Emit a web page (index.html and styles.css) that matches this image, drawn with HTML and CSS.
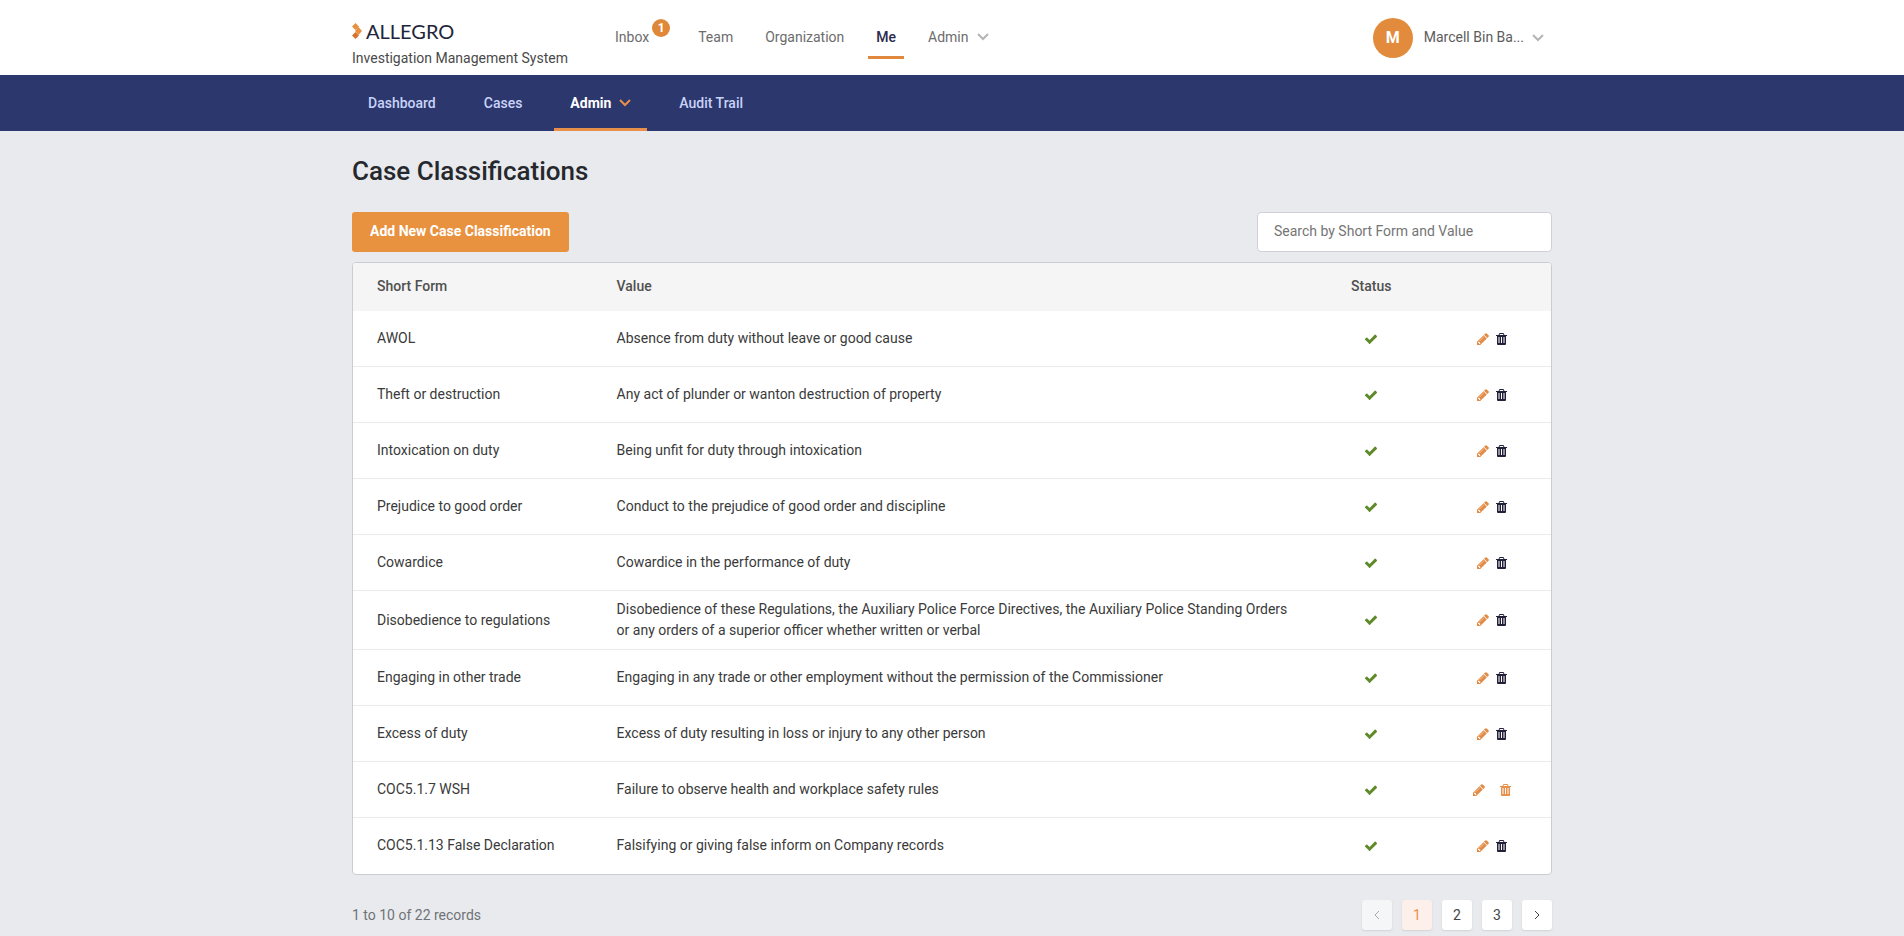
FILE: index.html
```html
<!DOCTYPE html>
<html lang="en">
<head>
  <meta charset="UTF-8" />
  <meta name="viewport" content="width=device-width, initial-scale=1.0"/>
  <title>Case Classifications</title>
  <link rel="stylesheet" href="styles.css">
</head>
<body>

  <svg class="sprite" aria-hidden="true">
    <symbol id="check" viewBox="0 0 1792 1792">
      <path d="M1671 566q0 40-28 68l-724 724-136 136q-28 28-68 28t-68-28l-136-136-362-362q-28-28-28-68t28-68l136-136q28-28 68-28t68 28l294 295 656-657q28-28 68-28t68 28l136 136q28 28 28 68z"/>
    </symbol>
    <symbol id="pencil" viewBox="0 0 1792 1792">
      <path d="M491 1536l91-91-235-235-91 91v107h128v128h107zm523-928q0-22-22-22-10 0-17 7l-542 542q-7 7-7 17 0 22 22 22 10 0 17-7l542-542q7-7 7-17zm-54-192l416 416-832 832h-416v-416zm683 96q0 53-37 90l-166 166-416-416 166-165q36-38 90-38 53 0 91 38l235 234q37 39 37 91z"/>
    </symbol>
    <symbol id="trash" viewBox="0 0 11 12">
      <path fill-rule="evenodd" d="M3.500 0h4l1 2H11v1h-1v8q0 1-1 1H2q-1 0-1-1V3H0V2h2.500zM4 1l-.5 1h4L7 1zM2.500 4v6h1V4zM5 4v6h1V4zM7.500 4v6h1V4z"/>
    </symbol>
    <symbol id="chevron" viewBox="0 0 12 8">
      <path d="M1 1l5 5 5-5" fill="none" stroke="currentColor" stroke-width="2"/>
    </symbol>
  </svg>

  <header class="topbar">
    <div class="wrap topbar-content">
      <div class="brand">
        <a href="#" class="logo">
          <svg class="logo-mark" viewBox="0 0 10 16" aria-hidden="true">
            <path fill="#e8903f" d="M3.500 0L7 3.500 3.500 7 0 3.500zM6.500 4L10 8l-3.500 4L3 8z"/>
            <path fill="#d9722e" d="M3.500 9L7 12.500 3.500 16 0 12.500z"/>
          </svg>
          ALLEGRO
        </a>
        <div class="tagline">Investigation Management System</div>
      </div>

      <nav class="main-nav">
        <a href="#">Inbox<span class="badge">1</span></a>
        <a href="#">Team</a>
        <a href="#">Organization</a>
        <a href="#" class="active">Me</a>
        <a href="#">Admin<svg class="chevron"><use href="#chevron"/></svg></a>
      </nav>

      <button type="button" class="user">
        <span class="avatar">M</span>
        <span>Marcell Bin Ba...</span>
        <svg class="chevron"><use href="#chevron"/></svg>
      </button>
    </div>
  </header>

  <nav class="subnav">
    <div class="wrap subnav-content">
      <a href="#">Dashboard</a>
      <a href="#">Cases</a>
      <a href="#" class="active">Admin<svg class="chevron"><use href="#chevron"/></svg></a>
      <a href="#">Audit Trail</a>
    </div>
  </nav>

  <main class="wrap">
    <h1>Case Classifications</h1>

    <div class="toolbar">
      <button type="button" class="btn-primary">Add New Case Classification</button>
      <input type="search" class="search" aria-label="Search" placeholder="Search by Short Form and Value" />
    </div>

    <div class="card">
      <table>
        <thead>
          <tr>
            <th class="col-short">Short Form</th>
            <th class="col-value">Value</th>
            <th class="col-status">Status</th>
            <th class="col-actions"></th>
          </tr>
        </thead>
        <tbody>
          <tr>
            <td>AWOL</td>
            <td>Absence from duty without leave or good cause</td>
            <td class="status"><svg class="icon"><use href="#check"/></svg></td>
            <td>
              <div class="actions">
                <button type="button" class="edit" aria-label="Edit"><svg class="icon"><use href="#pencil"/></svg></button>
                <button type="button" class="delete" aria-label="Delete"><svg class="icon"><use href="#trash"/></svg></button>
              </div>
            </td>
          </tr>
          <tr>
            <td>Theft or destruction</td>
            <td>Any act of plunder or wanton destruction of property</td>
            <td class="status"><svg class="icon"><use href="#check"/></svg></td>
            <td>
              <div class="actions">
                <button type="button" class="edit" aria-label="Edit"><svg class="icon"><use href="#pencil"/></svg></button>
                <button type="button" class="delete" aria-label="Delete"><svg class="icon"><use href="#trash"/></svg></button>
              </div>
            </td>
          </tr>
          <tr>
            <td>Intoxication on duty</td>
            <td>Being unfit for duty through intoxication</td>
            <td class="status"><svg class="icon"><use href="#check"/></svg></td>
            <td>
              <div class="actions">
                <button type="button" class="edit" aria-label="Edit"><svg class="icon"><use href="#pencil"/></svg></button>
                <button type="button" class="delete" aria-label="Delete"><svg class="icon"><use href="#trash"/></svg></button>
              </div>
            </td>
          </tr>
          <tr>
            <td>Prejudice to good order</td>
            <td>Conduct to the prejudice of good order and discipline</td>
            <td class="status"><svg class="icon"><use href="#check"/></svg></td>
            <td>
              <div class="actions">
                <button type="button" class="edit" aria-label="Edit"><svg class="icon"><use href="#pencil"/></svg></button>
                <button type="button" class="delete" aria-label="Delete"><svg class="icon"><use href="#trash"/></svg></button>
              </div>
            </td>
          </tr>
          <tr>
            <td>Cowardice</td>
            <td>Cowardice in the performance of duty</td>
            <td class="status"><svg class="icon"><use href="#check"/></svg></td>
            <td>
              <div class="actions">
                <button type="button" class="edit" aria-label="Edit"><svg class="icon"><use href="#pencil"/></svg></button>
                <button type="button" class="delete" aria-label="Delete"><svg class="icon"><use href="#trash"/></svg></button>
              </div>
            </td>
          </tr>
          <tr>
            <td>Disobedience to regulations</td>
            <td>Disobedience of these Regulations, the Auxiliary Police Force Directives, the Auxiliary Police Standing Orders or any orders of a superior officer whether written or verbal</td>
            <td class="status"><svg class="icon"><use href="#check"/></svg></td>
            <td>
              <div class="actions">
                <button type="button" class="edit" aria-label="Edit"><svg class="icon"><use href="#pencil"/></svg></button>
                <button type="button" class="delete" aria-label="Delete"><svg class="icon"><use href="#trash"/></svg></button>
              </div>
            </td>
          </tr>
          <tr>
            <td>Engaging in other trade</td>
            <td>Engaging in any trade or other employment without the permission of the Commissioner</td>
            <td class="status"><svg class="icon"><use href="#check"/></svg></td>
            <td>
              <div class="actions">
                <button type="button" class="edit" aria-label="Edit"><svg class="icon"><use href="#pencil"/></svg></button>
                <button type="button" class="delete" aria-label="Delete"><svg class="icon"><use href="#trash"/></svg></button>
              </div>
            </td>
          </tr>
          <tr>
            <td>Excess of duty</td>
            <td>Excess of duty resulting in loss or injury to any other person</td>
            <td class="status"><svg class="icon"><use href="#check"/></svg></td>
            <td>
              <div class="actions">
                <button type="button" class="edit" aria-label="Edit"><svg class="icon"><use href="#pencil"/></svg></button>
                <button type="button" class="delete" aria-label="Delete"><svg class="icon"><use href="#trash"/></svg></button>
              </div>
            </td>
          </tr>
          <tr>
            <td>COC5.1.7 WSH</td>
            <td>Failure to observe health and workplace safety rules</td>
            <td class="status"><svg class="icon"><use href="#check"/></svg></td>
            <td>
              <div class="actions removable">
                <button type="button" class="edit" aria-label="Edit"><svg class="icon"><use href="#pencil"/></svg></button>
                <button type="button" class="delete" aria-label="Delete"><svg class="icon"><use href="#trash"/></svg></button>
              </div>
            </td>
          </tr>
          <tr>
            <td>COC5.1.13 False Declaration</td>
            <td>Falsifying or giving false inform on Company records</td>
            <td class="status"><svg class="icon"><use href="#check"/></svg></td>
            <td>
              <div class="actions">
                <button type="button" class="edit" aria-label="Edit"><svg class="icon"><use href="#pencil"/></svg></button>
                <button type="button" class="delete" aria-label="Delete"><svg class="icon"><use href="#trash"/></svg></button>
              </div>
            </td>
          </tr>
        </tbody>
      </table>
    </div>

    <div class="table-footer">
      <span>1 to 10 of 22 records</span>
      <div class="pagination">
        <button type="button" aria-label="Previous" disabled><svg class="arrow" viewBox="0 0 6 10"><path d="M5 1L1 5l4 4"/></svg></button>
        <button type="button" class="current">1</button>
        <button type="button">2</button>
        <button type="button">3</button>
        <button type="button" aria-label="Next"><svg class="arrow" viewBox="0 0 6 10"><path d="M1 1l4 4-4 4"/></svg></button>
      </div>
    </div>
  </main>

</body>
</html>
```
FILE: styles.css
```css
* {
  box-sizing: border-box;
}

body {
  margin: 0;
  font-family: Roboto, sans-serif;
  font-size: 14px;
  line-height: 21px;
  color: #3a3a3a;
  background-color: #e9eaed;
}

a {
  color: inherit;
  text-decoration: none;
}

button {
  font: inherit;
  color: inherit;
  background: none;
  border: none;
  padding: 0;
  cursor: pointer;
}

.sprite {
  display: none;
}

.wrap {
  max-width: 1200px;
  margin: 0 auto;
}

.icon {
  display: block;
  width: 14px;
  height: 14px;
  fill: currentColor;
}

.chevron {
  width: 12px;
  height: 8px;
  margin-left: 8px;
  color: #b5b5b5;
}

/* top bar */
.topbar {
  background-color: #fff;
}

.topbar-content {
  display: flex;
  height: 75px;
}

.brand {
  width: 255px;
  padding-top: 18px;
}

.logo {
  display: flex;
  align-items: center;
  gap: 4px;
  font-family: Lato, sans-serif;
  font-size: 20px;
  line-height: 26px;
  color: #22253a;
}

.logo-mark {
  width: 10px;
  height: 16px;
}

.tagline {
  margin-top: 4px;
  color: #4a4a4a;
}

.main-nav {
  display: flex;
  gap: 16px;
  padding-top: 15px;
  color: #6c6c6c;
}

.main-nav a {
  display: flex;
  align-items: center;
  height: 44px;
  padding: 3px 8px 0;
  border-bottom: 3px solid transparent;
}

.main-nav .active {
  color: #2b2a4c;
  font-weight: 500;
  border-color: #e0883e;
}

.badge {
  width: 18px;
  height: 18px;
  margin: 0 -4px 18px 3px;
  border-radius: 50%;
  background-color: #e0883a;
  color: #fff;
  font-size: 12px;
  font-weight: 700;
  line-height: 18px;
  text-align: center;
}

.user {
  display: flex;
  align-items: center;
  margin-left: auto;
  padding-right: 8px;
  color: #5c5c5c;
}

.avatar {
  width: 40px;
  height: 40px;
  margin-right: 11px;
  border-radius: 50%;
  background-color: #e38b3c;
  color: #fff;
  font-size: 16px;
  font-weight: 700;
  line-height: 40px;
}

/* module navigation */
.subnav {
  background-color: #2c376d;
}

.subnav-content {
  display: flex;
  gap: 16px;
}

.subnav a {
  display: flex;
  align-items: center;
  height: 56px;
  padding: 0 16px;
  border-top: 3px solid transparent;
  border-bottom: 3px solid transparent;
  color: #c9d3f8;
  font-weight: 500;
}

.subnav .active {
  color: #fff;
  font-weight: 700;
  border-bottom-color: #e8904a;
}

.subnav .chevron {
  color: #e8904a;
}

/* page */
h1 {
  margin: 0;
  padding-top: 24px;
  font-size: 26px;
  line-height: 32px;
  font-weight: 500;
  color: #25282d;
}

.toolbar {
  display: flex;
  justify-content: space-between;
  margin: 25px 0 10px;
}

.btn-primary {
  height: 40px;
  padding: 0 18px 2px;
  border-radius: 3px;
  background-color: #e8913f;
  color: #fff;
  font-weight: 700;
}

.search {
  width: 295px;
  height: 40px;
  padding: 0 16px 2px;
  border: 1px solid #cfd0d8;
  border-radius: 4px;
  background-color: #fff;
  font: inherit;
}

.search::placeholder {
  color: #757575;
}

.card {
  border: 1px solid #cbccd2;
  border-radius: 4px;
  background-color: #fff;
  overflow: hidden;
}

table {
  width: 100%;
  table-layout: fixed;
  border-collapse: separate;
  border-spacing: 0;
}

th {
  height: 48px;
  padding: 0 24px 2px;
  background-color: #f5f5f5;
  color: #505050;
  font-weight: 500;
  text-align: left;
}

.col-short {
  width: 20%;
}

.col-value {
  width: 60%;
}

.col-status,
.col-actions {
  width: 10%;
  text-align: center;
}

td {
  height: 56px;
  padding: 8px 24px;
  border-bottom: 1px solid #ebebeb;
}

tbody tr:last-child td {
  border-bottom-color: transparent;
}

.status .icon {
  margin: 0 auto;
  color: #5f8a2a;
}

.actions {
  display: flex;
  justify-content: center;
  align-items: center;
  gap: 6px;
}

.edit {
  color: #e38b45;
}

.delete {
  color: #25203a;
}

.delete .icon {
  width: 11px;
  height: 12px;
}

.removable {
  gap: 14px;
}

.removable .delete {
  color: #e8904a;
}

.table-footer {
  display: flex;
  justify-content: space-between;
  align-items: center;
  padding: 25px 0 6px;
  color: #6f7277;
}

.pagination {
  display: flex;
  gap: 10px;
}

.pagination button {
  width: 30px;
  height: 30px;
  border-radius: 3px;
  background-color: #fff;
  color: #444;
  box-shadow: 0 1px 2px rgba(0, 0, 0, 0.1);
}

.pagination .current {
  background-color: #fdf0ea;
  color: #e8904a;
}

.pagination button:disabled {
  background-color: #f5f6f8;
  color: #aaa;
}

.arrow {
  display: block;
  width: 6px;
  height: 10px;
  margin: 0 auto;
  fill: none;
  stroke: currentColor;
}
```
